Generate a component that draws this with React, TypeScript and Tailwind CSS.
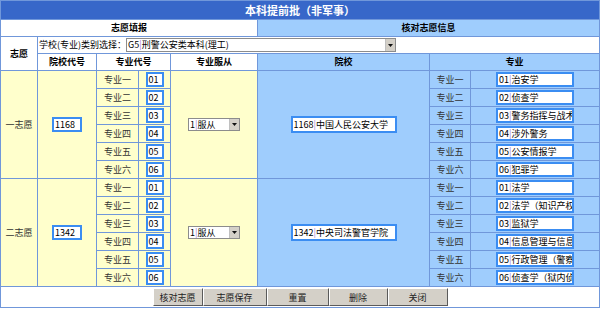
import React from "react";

type Choice = {
    name: string
    code: string
    school: string
    majors: string[]
}

const labels = ['专业一', '专业二', '专业三', '专业四', '专业五', '专业六']

const choices: Choice[] = [
    {
        name: '一志愿',
        code: '1168',
        school: '中国人民公安大学',
        majors: ['治安学', '侦查学', '警务指挥与战术', '涉外警务', '公安情报学', '犯罪学'],
    },
    {
        name: '二志愿',
        code: '1342',
        school: '中央司法警官学院',
        majors: ['法学', '法学（知识产权方向）', '监狱学', '信息管理与信息系统', '行政管理（警察管理）', '侦查学（狱内侦查）'],
    },
]

const Box = ({className, children}: { className: string, children: React.ReactNode }) => (
    <div
        className={'h-[15px] border-2 border-[#3b8df2] bg-white px-px leading-[11px] text-black whitespace-nowrap overflow-hidden ' + className}>
        {children}
    </div>
)

const Coded = ({code, text}: { code: string, text: string }) => (
    <>{code}<span className="text-[#a77bd6]">|</span>{text}</>
)

const Arrow = () => (
    <span
        className="flex h-full w-[10px] items-center justify-center border-l border-[#c0c0c0] bg-[#d4d0c8]">
        <svg width="5" height="3" viewBox="0 0 5 3"><path d="M0 0h5L2.5 3z" fill="#111"/></svg>
    </span>
)

const Select = ({className, code, text}: { className: string, code: string, text: string }) => (
    <div className={'flex items-stretch border border-[#8c8c8c] bg-white ' + className}>
        <span className="flex-1 overflow-hidden whitespace-nowrap pl-px leading-[11px] text-black">
            <Coded code={code} text={text}/>
        </span>
        <Arrow/>
    </div>
)

const btn = 'h-[18px] bg-[#d4d0c8] border border-t-white border-l-white border-r-[#5a5a5a] border-b-[#5a5a5a] text-[#222] leading-[15px]'

const App = () => {
    return (
        <div className="w-[600px] bg-white text-[9px] text-[#333]"
             style={{fontFamily: '"Noto Sans CJK SC", "Liberation Sans", sans-serif'}}>
            <div
                className="grid grid-cols-[36px_58px_41px_31px_86px_171px_40px_128px] grid-rows-[18px_16px_16px_16px_repeat(12,17px)_20px] gap-px border border-[#7097da] bg-[#7097da]">
                <div className="col-span-8 flex items-center justify-center bg-[#3767c9] text-[11px] font-bold text-white">
                    本科提前批（非军事）
                </div>

                <div className="col-span-5 flex items-center justify-center bg-white font-bold text-black">志愿填报</div>
                <div className="col-span-3 flex items-center justify-center bg-[#9fcdfd] font-bold text-black">核对志愿信息</div>

                <div className="row-span-2 flex items-center justify-center bg-white font-bold text-black">志愿</div>
                <div className="col-span-7 flex items-center bg-white pl-px text-black">
                    <span>学校(专业)类别选择：</span>
                    <Select className="h-[14px] w-[270px]" code="G5" text="刑警公安类本科(理工)"/>
                </div>

                <div className="flex items-center justify-center bg-white font-bold text-black">院校代号</div>
                <div className="col-span-2 flex items-center justify-center bg-white font-bold text-black">专业代号</div>
                <div className="flex items-center justify-center bg-white font-bold text-black">专业服从</div>
                <div className="flex items-center justify-center bg-[#9fcdfd] font-bold text-black">院校</div>
                <div className="col-span-2 flex items-center justify-center bg-[#9fcdfd] font-bold text-black">专业</div>

                {choices.map((c) => (
                    <React.Fragment key={c.code}>
                        {labels.map((label, i) => (
                            <React.Fragment key={label}>
                                {i === 0 && <>
                                    <div className="row-span-6 flex items-center justify-center bg-[#ffffcc]">{c.name}</div>
                                    <div className="row-span-6 flex items-center justify-center bg-[#ffffcc]">
                                        <Box className="w-[30px]">{c.code}</Box>
                                    </div>
                                </>}
                                <div className="flex items-center justify-center bg-[#ffffcc]">{label}</div>
                                <div className="flex items-center justify-center bg-[#ffffcc]">
                                    <Box className="w-[18px]">0{i + 1}</Box>
                                </div>
                                {i === 0 && <>
                                    <div className="row-span-6 flex items-center justify-center bg-[#ffffcc]">
                                        <Select className="h-[13px] w-[52px]" code="1" text="服从"/>
                                    </div>
                                    <div className="row-span-6 flex items-center justify-center bg-[#9fcdfd]">
                                        <Box className="h-[17px] w-[106px] leading-[13px]">
                                            <Coded code={c.code} text={c.school}/>
                                        </Box>
                                    </div>
                                </>}
                                <div className="flex items-center justify-center bg-[#9fcdfd]">{label}</div>
                                <div className="flex items-center justify-center bg-[#9fcdfd]">
                                    <Box className="w-[78px]">
                                        <Coded code={'0' + (i + 1)} text={c.majors[i]}/>
                                    </Box>
                                </div>
                            </React.Fragment>
                        ))}
                    </React.Fragment>
                ))}

                <div className="col-span-8 flex items-center justify-center bg-white">
                    <button className={btn + ' w-[50px]'}>核对志愿</button>
                    <button className={btn + ' w-[64px]'}>志愿保存</button>
                    <button className={btn + ' w-[62px]'}>重置</button>
                    <button className={btn + ' w-[59px]'}>删除</button>
                    <button className={btn + ' w-[60px]'}>关闭</button>
                </div>
            </div>
        </div>
    );
};

export default App;
